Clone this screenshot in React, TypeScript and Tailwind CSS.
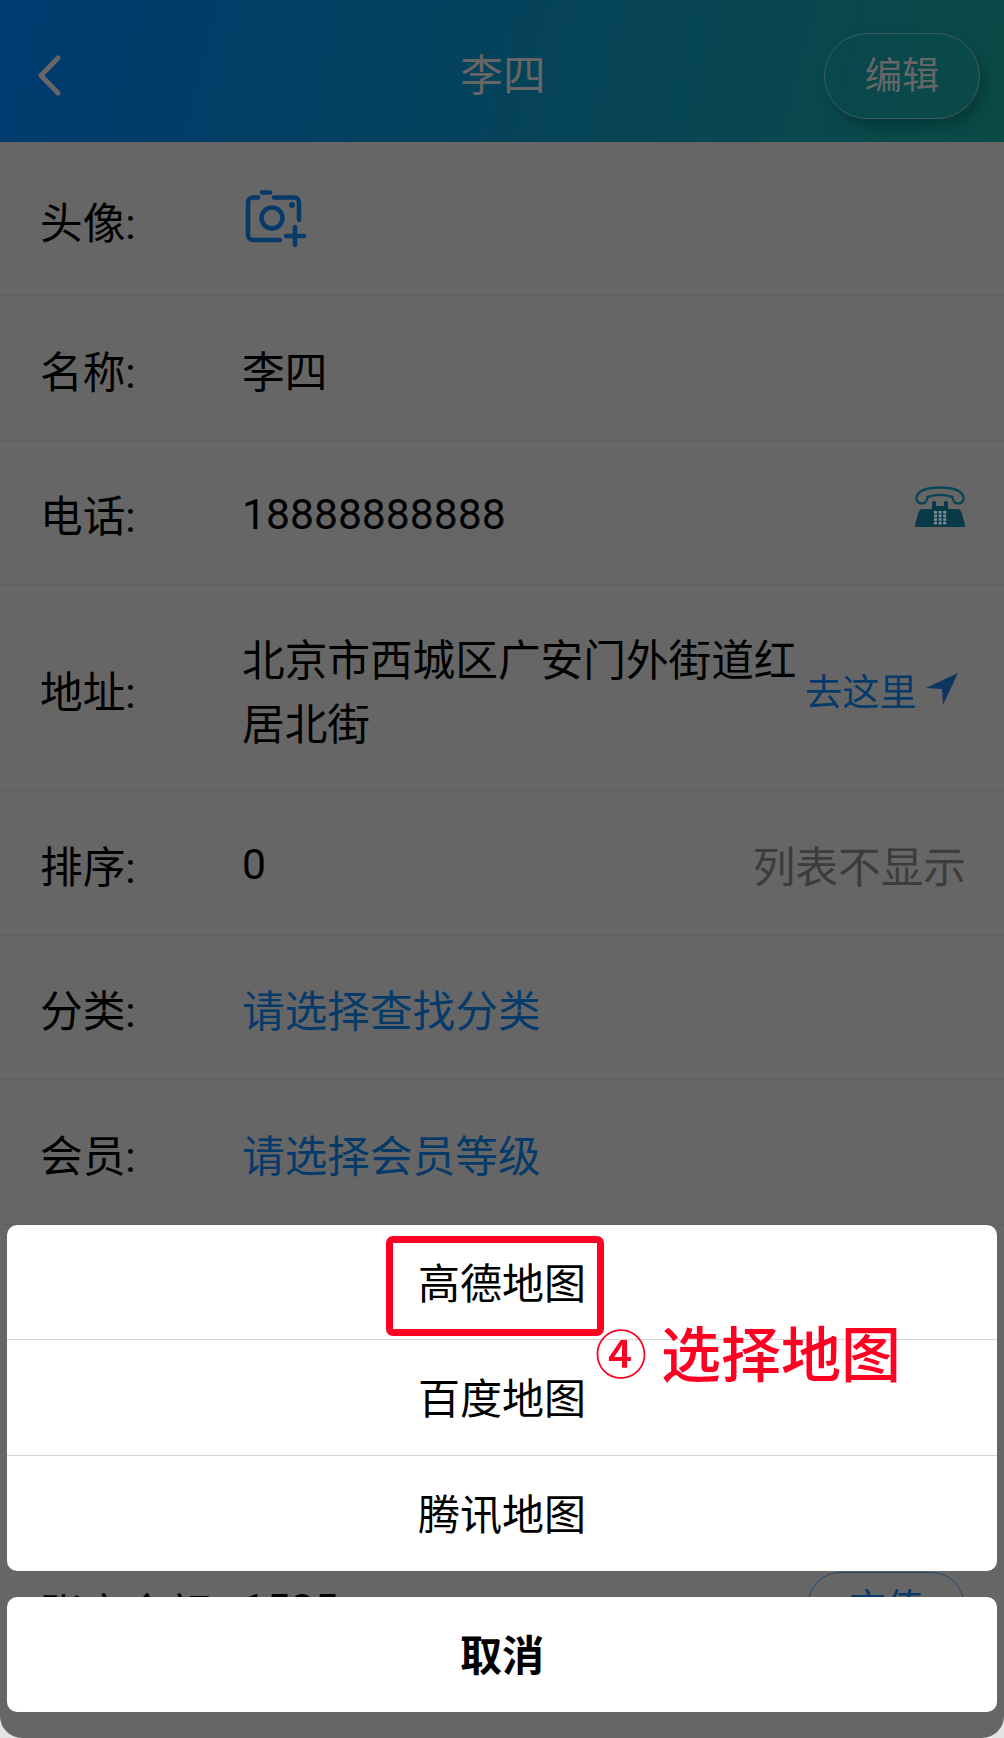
const blue = 'text-[#063a68]'

function Row({ label, children }: { label: string; children: React.ReactNode }) {
  return (
    <div className="flex h-[144.5px] items-center border-b border-[#5f5f5f] pl-[40px] pr-[38px]">
      <span className="w-[202px] shrink-0 pt-[10px] text-black">{label}:</span>
      {children}
    </div>
  )
}

function CameraPlus() {
  return (
    <svg width="64" height="60" viewBox="0 0 64 60" fill="none" stroke="#063a68" strokeWidth="4.5" strokeLinecap="round" className="ml-[1px]">
      <path d="M19 3.5H27" />
      <path d="M15 8.5H10a5 5 0 0 0-5 5V46a5 5 0 0 0 5 5H37" />
      <path d="M31 8.5H51a5 5 0 0 1 5 5V31" />
      <circle cx="29" cy="29" r="10.5" />
      <circle cx="49" cy="16" r="3" fill="#063a68" stroke="none" />
      <path d="M52 38V56M43 47H61" />
    </svg>
  )
}

function DeskPhone() {
  const dots = [0, 1, 2, 3].flatMap((r) => [0, 1, 2].map((c) => [19 + c * 4.6, 25 + r * 3.6]))
  return (
    <svg width="50" height="41" viewBox="0 0 50 41" className="mb-[11px] mr-[1px]">
      <path
        d="M1.5 12C2 4 14 1.5 25 1.5S48 4 48.5 12C48.5 16 46 17.5 43 17.5S38 16 37.5 11C30 8.5 20 8.5 12.5 11C12 16 10 17.5 7 17.5S1.5 16 1.5 12Z"
        fill="none"
        stroke="#0a4656"
        strokeWidth="2.4"
      />
      <path d="M17 23V17a2 2 0 0 1 4 0V20H29V17a2 2 0 0 1 4 0V23H43C45 23 46 25 47 28L50 39a1.5 1.5 0 0 1-1.5 2H1.5A1.5 1.5 0 0 1 0 39L3 28C4 25 5 23 7 23Z" fill="#083a48" />
      {dots.map(([x, y]) => (
        <rect key={`${x}-${y}`} x={x} y={y} width="3" height="2.6" fill="#808f93" />
      ))}
    </svg>
  )
}

export default function App() {
  return (
    <div className="h-[1738px] w-[1004px] bg-[#e4e4e4]">
      <div className="relative h-full overflow-hidden rounded-b-[22px] bg-[#666666] text-[42.67px] leading-[64px] [font-family:Roboto,'Noto_Sans_CJK_SC',sans-serif]">
        {/* header */}
        <header className="flex h-[142px] items-center bg-[linear-gradient(105deg,#003a70_0%,#0a4b46_100%)] text-[#666666]">
          <div className="w-[180px] pl-[36px]">
            <svg width="28" height="44" viewBox="0 0 28 44" fill="none" stroke="#666666" strokeWidth="5" strokeLinecap="round" strokeLinejoin="round" className="mt-[10px]">
              <path d="M22 4L5 21.5L22 39" />
            </svg>
          </div>
          <h1 className="mt-[10px] flex-1 pl-[2px] text-center font-normal">李四</h1>
          <div className="mt-[10px] w-[180px]">
            <button className="flex h-[86px] w-[156px] items-center justify-center rounded-[43px] border border-[#3a5c5c] text-[37.3px] shadow-[6px_8px_14px_rgba(0,0,0,0.22)]">
              编辑
            </button>
          </div>
        </header>

        {/* info rows */}
        <div className="flex h-[154px] items-center border-b border-[#5f5f5f] pl-[40px]">
          <span className="w-[202px] shrink-0 pt-[10px] text-black">头像:</span>
          <CameraPlus />
        </div>
        <Row label="名称">
          <span className="pt-[10px] text-black">李四</span>
        </Row>
        <Row label="电话">
          <span className="flex-1 pt-[3px] text-black">18888888888</span>
          <DeskPhone />
        </Row>
        <div className="flex h-[206px] items-center border-b border-[#5f5f5f] pl-[40px] pr-[46px]">
          <span className="w-[202px] shrink-0 pt-[10px] text-black">地址:</span>
          <span className="w-[563px] shrink-0 pt-[10px] text-black">北京市西城区广安门外街道红居北街</span>
          <span className={`flex items-center gap-[9px] pt-[10px] text-[37.3px] ${blue}`}>
            去这里
            <svg width="32" height="32" viewBox="0 0 32 32" className="-mt-[8px]">
              <path d="M32 0L0 15L16 16L17 32Z" fill="#0d3560" />
            </svg>
          </span>
        </div>
        <Row label="排序">
          <span className="flex-1 pt-[3px] text-black">0</span>
          <span className="pt-[10px] text-[#3c3c3c]">列表不显示</span>
        </Row>
        <Row label="分类">
          <span className={`pt-[10px] ${blue}`}>请选择查找分类</span>
        </Row>
        <Row label="会员">
          <span className={`pt-[10px] ${blue}`}>请选择会员等级</span>
        </Row>
        <div className="mt-[318px] flex h-[144px] items-center pl-[40px] pr-[40px]">
          <span className="w-[202px] shrink-0 text-black">账户余额:</span>
          <span className="flex-1 pb-[12px] text-black">1585</span>
          <button className={`flex h-[86px] w-[156px] items-center justify-center rounded-[32px] border border-[#1f4a70] pb-[14px] text-[37.3px] ${blue}`}>
            充值
          </button>
        </div>

        {/* action sheet */}
        <div className="absolute inset-x-[7px] bottom-[26px] flex flex-col gap-[26px] text-center text-[42px] text-black">
          <div className="overflow-hidden rounded-[10px] bg-white">
            <div className="flex h-[114px] items-center justify-center pt-[5px]">高德地图</div>
            <div className="flex h-[116px] items-center justify-center border-t border-[#d6d6d6] pt-[5px]">百度地图</div>
            <div className="flex h-[116px] items-center justify-center border-t-[1.5px] border-[#d6d6d6] pt-[5px]">腾讯地图</div>
          </div>
          <div className="flex h-[115px] items-center justify-center rounded-[10px] bg-white pt-[5px] font-bold">取消</div>
        </div>

        {/* red annotation */}
        <div className="absolute left-[386px] top-[1236px] h-[100px] w-[218px] rounded-[7px] border-[7px] border-[#ff0022]" />
        <div className="absolute left-[595px] top-[1315px] flex items-center gap-[14px] whitespace-nowrap text-[60px] font-medium leading-[84px] text-[#ff0022]">
          <span className="text-[52px]">④</span>
          <span>选择地图</span>
        </div>
      </div>
    </div>
  )
}
